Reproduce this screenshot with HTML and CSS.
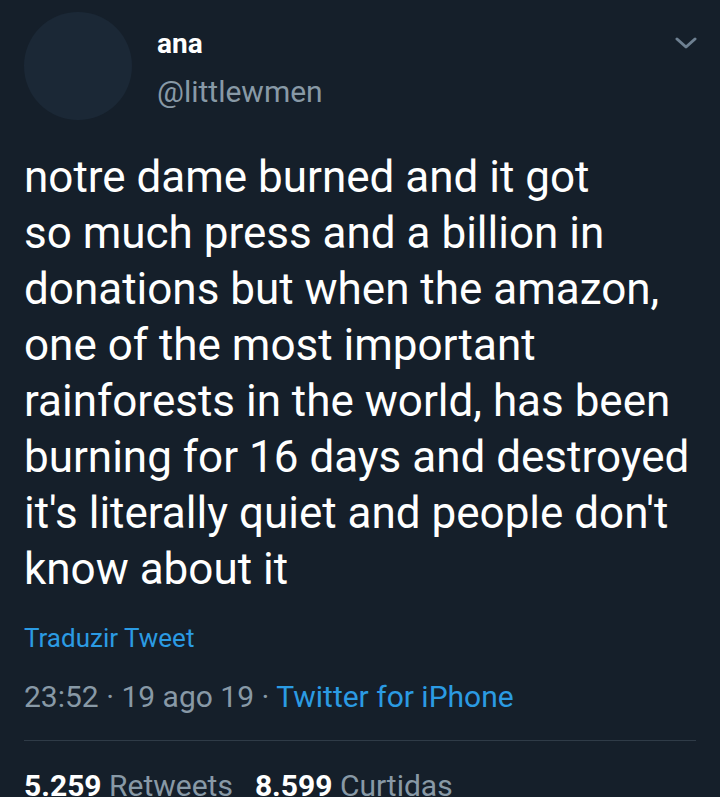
FILE: index.html
```html
<!DOCTYPE html>
<html>
<head>
<meta charset="utf-8">
<link rel="stylesheet" href="styles.css">
</head>
<body>
<div class="tweet">
  <div class="header">
    <div class="avatar"></div>
    <div class="names">
      <div class="name">ana</div>
      <div class="handle">@littlewmen</div>
    </div>
    <svg class="chevron" width="22" height="13" viewBox="0 0 22 13"><path d="M2 2 L11 10 L20 2" fill="none" stroke="#6e8091" stroke-width="3" stroke-linecap="round" stroke-linejoin="round"/></svg>
  </div>
  <div class="body">notre dame burned and it got<br>so much press and a billion in<br>donations but when the amazon,<br>one of the most important<br>rainforests in the world, has been<br>burning for 16 days and destroyed<br>it's literally quiet and people don't<br>know about it</div>
  <div class="translate">Traduzir Tweet</div>
  <div class="meta">23:52 · 19 ago 19 · <span class="source">Twitter for iPhone</span></div>
  <div class="sep"></div>
  <div class="stats"><b>5.259</b> Retweets<span class="gap"></span><b>8.599</b> Curtidas</div>
</div>
</body>
</html>
```
FILE: styles.css
```css
html, body {
  margin: 0;
  padding: 0;
  background: #151f2a;
}
body {
  font-family: Roboto, "Noto Sans", sans-serif;
  color: #ffffff;
  width: 720px;
  height: 797px;
  overflow: hidden;
}
.tweet {
  padding: 12px 24px 0 24px;
}
.header {
  display: flex;
  align-items: flex-start;
}
.avatar {
  width: 108px;
  height: 108px;
  border-radius: 50%;
  background: #1b2836;
  flex: none;
}
.names {
  margin-left: 25px;
  padding-top: 16px;
  flex: 1;
}
.name {
  font-size: 28px;
  font-weight: 700;
  line-height: 32px;
}
.handle {
  font-size: 30px;
  line-height: 34px;
  color: #8899a6;
  margin-top: 15px;
}
.chevron {
  margin-top: 25px;
  margin-right: -1px;
}
.body {
  margin-top: 29px;
  font-size: 44px;
  line-height: 56px;
  white-space: nowrap;
}
.translate {
  margin-top: 25px;
  font-size: 26px;
  line-height: 32px;
  color: #2b9be3;
}
.meta {
  margin-top: 25px;
  font-size: 30px;
  line-height: 36px;
  color: #8899a6;
}
.source {
  color: #2b9be3;
}
.sep {
  margin-top: 25px;
  height: 1px;
  background: #2f3b47;
}
.stats {
  margin-top: 27px;
  font-size: 30px;
  line-height: 36px;
  color: #8899a6;
  white-space: nowrap;
}
.stats b {
  color: #ffffff;
  font-weight: 700;
}
.gap {
  display: inline-block;
  width: 22px;
}
```
